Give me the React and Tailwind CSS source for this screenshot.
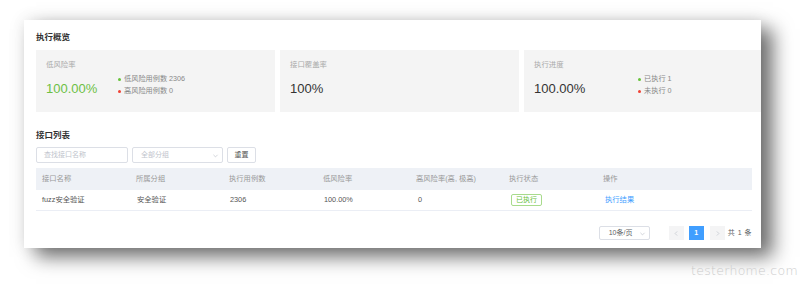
import React from "react";

const FONT = { fontFamily: '"Liberation Sans", "Noto Sans CJK SC", sans-serif' };

const Chevron = ({ dir = "down", className = "" }) => {
  const pts = {
    down: "2,4 5,7 8,4",
    left: "6,2 3,5 6,8",
    right: "4,2 7,5 4,8",
  }[dir];
  return (
    <svg viewBox="0 0 10 10" className={className} fill="none" stroke="currentColor" strokeWidth="1">
      <polyline points={pts} />
    </svg>
  );
};

const Legend = ({ items }) => (
  <div className="flex flex-col text-[7.2px] leading-[12px] text-[#888]">
    {items.map((it) => (
      <div key={it.text} className="flex items-center gap-[3px]">
        <span className={`w-[3px] h-[3px] rounded-full ${it.dot}`} />
        <span>{it.text}</span>
      </div>
    ))}
  </div>
);

const StatBox = ({ label, value, valueClass, valueWidth, legend, width }) => (
  <div className={`bg-[#f4f4f4] h-[62px] pl-[10px] pt-[10px] ${width}`}>
    <div className="text-[7.4px] leading-[10px] text-[#aaa]">{label}</div>
    <div className="flex items-start mt-[3px]">
      <div className={`text-[13px] leading-[15px] mt-[7.7px] ${valueClass} ${valueWidth}`}>{value}</div>
      {legend && <Legend items={legend} />}
    </div>
  </div>
);

const cols = "grid grid-cols-[94px_93px_94px_93px_93px_94px_1fr]";

export default function App() {
  const headers = ["接口名称", "所属分组", "执行用例数", "低风险率", "高风险率(高, 极高)", "执行状态", "操作"];

  return (
    <div className="relative w-[803px] h-[290px] bg-white overflow-hidden" style={FONT}>
      <div className="pt-[20px] pl-[24px]">
        <div className="w-[737px] h-[228px] bg-white overflow-hidden pl-[12px] pt-[11px] shadow-[12px_9px_18px_rgba(0,0,0,0.55),0_0_16px_rgba(0,0,0,0.1)]">
          {/* 执行概览 */}
          <div className="text-[8.5px] leading-[12px] font-bold text-[#333]">执行概览</div>
          <div className="flex gap-[5px] mt-[7px] w-[730px]">
            <StatBox
              width="w-[239px]"
              label="低风险率"
              value="100.00%"
              valueClass="text-[#6cc044]"
              valueWidth="w-[72px]"
              legend={[
                { dot: "bg-[#67c23a]", text: "低风险用例数 2306" },
                { dot: "bg-[#f04134]", text: "高风险用例数 0" },
              ]}
            />
            <StatBox
              width="w-[239px]"
              label="接口覆盖率"
              value="100%"
              valueClass="text-[#333]"
              valueWidth="w-[72px]"
            />
            <StatBox
              width="w-[240px]"
              label="执行进度"
              value="100.00%"
              valueClass="text-[#333]"
              valueWidth="w-[104px]"
              legend={[
                { dot: "bg-[#67c23a]", text: "已执行 1" },
                { dot: "bg-[#f04134]", text: "未执行 0" },
              ]}
            />
          </div>

          {/* 接口列表 */}
          <div className="text-[8.5px] leading-[12px] font-bold text-[#333] mt-[17px]">接口列表</div>
          <div className="flex gap-[4px] mt-[6px] h-[16px]">
            <div className="w-[92px] border border-[#dcdfe6] rounded-[2px] flex items-center pl-[7px] text-[7px] text-[#c0c4cc]">
              查找接口名称
            </div>
            <div className="w-[91px] border border-[#dcdfe6] rounded-[2px] flex items-center justify-between pl-[8px] pr-[3px] text-[7px] text-[#c0c4cc]">
              <span>全部分组</span>
              <Chevron className="w-[7px] h-[7px]" />
            </div>
            <div className="w-[29px] border border-[#dcdfe6] rounded-[2px] flex items-center justify-center text-[7px] text-[#555]">
              重置
            </div>
          </div>

          <div className="w-[716px] mt-[5px] text-[7.3px]">
            <div className={`${cols} bg-[#eef1f6] h-[22px] items-center text-[#999]`}>
              {headers.map((h) => (
                <div key={h} className="pl-[6px]">{h}</div>
              ))}
            </div>
            <div className={`${cols} h-[21px] items-center text-[#555] border-b border-[#ebeef5]`}>
              <div className="pl-[6px]">fuzz安全验证</div>
              <div className="pl-[7px]">安全验证</div>
              <div className="pl-[7px]">2306</div>
              <div className="pl-[7px]">100.00%</div>
              <div className="pl-[8px]">0</div>
              <div className="pl-[8px]">
                <span className="inline-flex items-center justify-center w-[31px] h-[12px] border border-[#a8db8c] rounded-[2px] text-[#67c23a] text-[7px]">
                  已执行
                </span>
              </div>
              <div className="pl-[8px] text-[#409eff]">执行结果</div>
            </div>
          </div>

          {/* pagination */}
          <div className="w-[716px] flex justify-end items-center mt-[15px] h-[14px] text-[7px]">
            <div className="w-[51px] h-[14px] border border-[#dcdfe6] rounded-[2px] flex items-center justify-between pl-[9px] pr-[3px] text-[#606266]">
              <span>10条/页</span>
              <Chevron className="w-[7px] h-[7px] text-[#c0c4cc]" />
            </div>
            <div className="ml-[19px] w-[15px] h-[14px] bg-[#f4f4f5] flex items-center justify-center text-[#c0c4cc]">
              <Chevron dir="left" className="w-[7px] h-[7px]" />
            </div>
            <div className="ml-[5px] w-[15px] h-[14px] bg-[#409eff] text-white font-bold flex items-center justify-center">1</div>
            <div className="ml-[6px] w-[15px] h-[14px] bg-[#f4f4f5] flex items-center justify-center text-[#c0c4cc]">
              <Chevron dir="right" className="w-[7px] h-[7px]" />
            </div>
            <div className="ml-[3px] text-[#606266] tracking-[0.5px]">共 1 条</div>
          </div>
        </div>
      </div>

      {/* watermark */}
      <div className="absolute left-[691px] top-[262px] text-[12.5px] leading-[18px] text-[#cbcbcb] tracking-[0.3px] font-light" style={{ fontFamily: '"DejaVu Sans", sans-serif' }}>
        testerhome.com
      </div>
    </div>
  );
}
